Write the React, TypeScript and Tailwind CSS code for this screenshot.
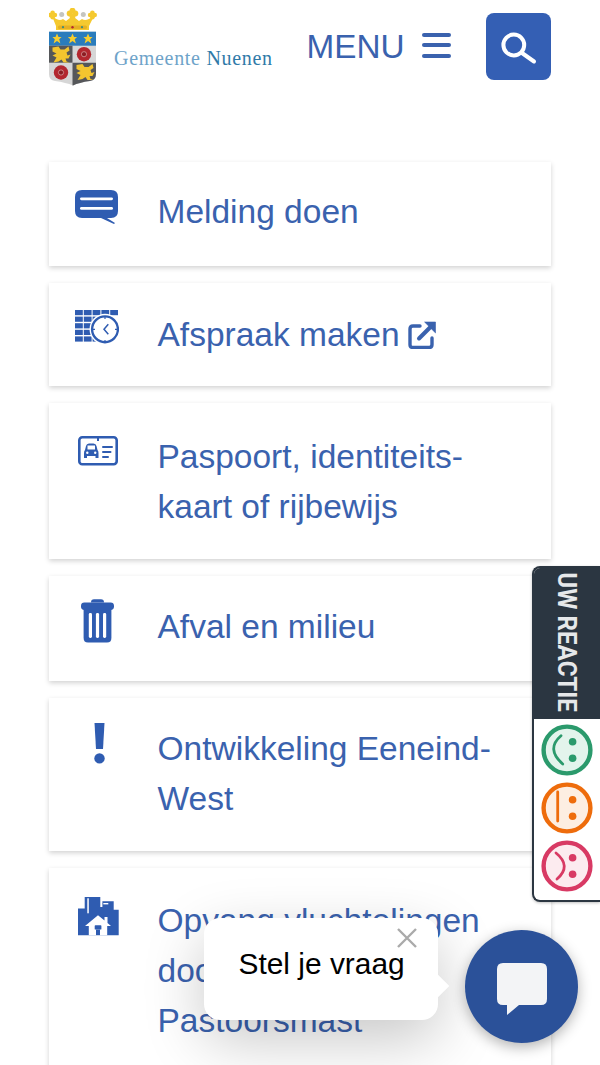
import React from "react";

const blue = "#3a62ae";

function Logo() {
  const star = (cx: number) => (
    <polygon
      fill="#f6cd2e"
      points={`${cx},25.5 ${cx + 1.5},29 ${cx + 4.6},29 ${cx + 2.2},31.2 ${cx + 3.4},35.5 ${cx},33 ${cx - 3.4},35.5 ${cx - 2.2},31.2 ${cx - 4.6},29 ${cx - 1.5},29`}
    />
  );
  const lion = (x: number, y: number) => (
    <path
      transform={`translate(${x} ${y})`}
      fill="#f3c52f"
      d="M2 1 L8 0 L10 3 L14 3 L18 0 L19 4 L16 6 L17 9 L20 8 L18 12 L15 12 L16 15 L19 16 L13 16 L11 13 L8 15 L3 16 L6 11 L2 9 L6 7 L2 5Z"
    />
  );
  const rose = (cx: number, cy: number) => (
    <g>
      <circle cx={cx} cy={cy} r="7.2" fill="#b3272f" />
      <circle cx={cx} cy={cy} r="2.6" fill="#8c1c22" stroke="#e8c0c0" strokeWidth="0.6" />
    </g>
  );
  const clover = (cx: number, cy: number, r: number) => (
    <g fill="#f5c92f">
      <circle cx={cx} cy={cy - r} r={r} />
      <circle cx={cx - r} cy={cy} r={r} />
      <circle cx={cx + r} cy={cy} r={r} />
      <circle cx={cx} cy={cy + r} r={r} />
    </g>
  );
  return (
    <svg width="48" height="78" viewBox="0 0 48 78" className="block shrink-0">
      {clover(23.5, 5.5, 2.9)}
      {clover(3.6, 7, 2.3)}
      {clover(43.4, 7, 2.3)}
      <circle cx="12.7" cy="6.4" r="2.5" fill="#c5c5c0" />
      <circle cx="34.3" cy="6.4" r="2.5" fill="#c5c5c0" />
      <path d="M3 8 C8 12 11 13 14 11 L17 13 L23.5 8 L30 13 L33 11 C36 13 39 12 45 8 L40 18 L40 22 L7 22 L7 18Z" fill="#f5c92f" />
      <rect x="9" y="17.5" width="29" height="3.5" rx="1.5" fill="#e5b024" />
      <circle cx="14" cy="19.2" r="1.1" fill="#3d8d7a" />
      <circle cx="23.5" cy="19.2" r="1.2" fill="#b3272f" />
      <circle cx="33" cy="19.2" r="1.1" fill="#3d8d7a" />
      <path d="M0 23.7 H47 V66 Q47 72 41 73 Q30 74.5 24 77.5 Q17 74.5 6 73 Q0 72 0 66Z" fill="#d6d6d6" />
      <rect x="0" y="23.7" width="47" height="14" fill="#2a7cbc" />
      {star(8)}
      {star(23.5)}
      {star(39)}
      <rect x="0" y="37.7" width="23.5" height="17" fill="#55575a" />
      <path d="M23.5 54.7 H47 V66 Q47 72 41 73 Q30 74.5 24 77.5 L23.5 77.3Z" fill="#55575a" />
      {lion(1.5, 38.5)}
      {lion(25.5, 56)}
      {rose(35, 46.2)}
      {rose(12, 64.5)}
    </svg>
  );
}

function ChatIcon() {
  return (
    <svg width="44" height="35" viewBox="0 0 44 35" className="block">
      <path d="M7 0 H36 Q43 0 43 7 V21 Q43 28 36 28 H32 L40 33 L39 34 L26 28 H7 Q0 28 0 21 V7 Q0 0 7 0Z" fill="#2f5cb1" />
      <rect x="5" y="7.4" width="33" height="2.8" rx="1.4" fill="#fff" />
      <rect x="5" y="17" width="33" height="2.8" rx="1.4" fill="#fff" />
    </svg>
  );
}

function CalendarIcon() {
  const cells: React.ReactNode[] = [];
  const xs = [0, 8.8, 17.6, 26.4, 35.2];
  const ys = [0, 6.6, 13.2, 19.8, 26.4];
  ys.forEach((y) =>
    xs.forEach((x) => {
      if (y > 0 && x > 20) return;
      cells.push(<rect key={`${x}-${y}`} x={x} y={y} width="7.8" height="5.2" fill="#2f5cb1" />);
    })
  );
  return (
    <svg width="44" height="34" viewBox="0 0 44 34" className="block">
      {cells}
      <circle cx="30" cy="19.3" r="15.5" fill="#fff" />
      <circle cx="30" cy="19.3" r="12.9" fill="#fff" stroke="#2f5cb1" strokeWidth="2.4" />
      <path d="M33.3 14.3 L29 19.3 L33.3 24.3" fill="none" stroke="#2f5cb1" strokeWidth="1.5" />
      <path d="M30 7 V9 M30 30 V32 M18 19.3 H20 M40 19.3 H42" stroke="#2f5cb1" strokeWidth="1.2" />
    </svg>
  );
}

function CardIcon() {
  return (
    <svg width="40" height="30" viewBox="0 0 40 30" className="block">
      <rect x="1.3" y="1.3" width="37.4" height="27" rx="3" fill="#fff" stroke="#2f5cb1" strokeWidth="2.6" />
      <rect x="19" y="1" width="2" height="4" fill="#2f5cb1" />
      <path d="M8 10 Q8.5 7.5 11 7.5 H15.5 Q18 7.5 18.5 10 L19.5 14 Q20.5 15 20.5 17 V22 H17.5 V20 H9 V22 H6 V17 Q6 15 7 14Z" fill="#2f5cb1" />
      <rect x="9.5" y="9.5" width="7.5" height="4" fill="#fff" />
      <circle cx="9.3" cy="16.8" r="1.2" fill="#fff" />
      <circle cx="17.2" cy="16.8" r="1.2" fill="#fff" />
      <rect x="24" y="10" width="11" height="2" rx="1" fill="#2f5cb1" />
      <rect x="24" y="15" width="9.5" height="2" rx="1" fill="#2f5cb1" />
      <rect x="24" y="20" width="7" height="2" rx="1" fill="#2f5cb1" />
    </svg>
  );
}

function TrashIcon() {
  return (
    <svg width="33" height="44" viewBox="0 0 33 44" className="block">
      <path d="M10 3.6 Q10 0.3 13 0.3 H20 Q23 0.3 23 3.6Z" fill="#2f5cb1" />
      <rect x="0" y="3.6" width="33" height="7.4" rx="3.4" fill="#2f5cb1" />
      <path d="M2.6 9 H30.4 V39 Q30.4 43.6 26 43.6 H7 Q2.6 43.6 2.6 39Z" fill="#2f5cb1" />
      <rect x="7.8" y="14" width="3.2" height="25" rx="1.4" fill="#fff" />
      <rect x="14.9" y="14" width="3.2" height="25" rx="1.4" fill="#fff" />
      <rect x="22" y="14" width="3.2" height="25" rx="1.4" fill="#fff" />
    </svg>
  );
}

function ExclaimIcon() {
  return (
    <svg width="11" height="41" viewBox="0 0 11 41" className="block">
      <path d="M0.5 0 H10.5 L9 26 H2Z" fill="#2f5cb1" />
      <circle cx="5.5" cy="35.4" r="5.2" fill="#2f5cb1" />
    </svg>
  );
}

function HouseIcon() {
  return (
    <svg width="42" height="39" viewBox="0 0 42 39" className="block">
      <path d="M0 11.6 H6.7 V0 H22.3 V10 H24.4 V4.3 H35.7 V12.7 H40.7 V38.3 H0Z" fill="#2f5cb1" />
      <rect x="9.3" y="1.3" width="1.5" height="15" fill="#fff" />
      <rect x="25.3" y="6" width="5" height="1.4" fill="#fff" />
      <path d="M20 18.3 L26.5 23.6 V20 H29.5 V26 L33 29 H29.2 V38.3 H22 V32.6 H18 V38.3 H10.8 V29 H7Z" fill="#fff" />
      <rect x="16.7" y="28.3" width="6.7" height="4.3" rx="0.7" fill="#2f5cb1" />
    </svg>
  );
}

function ExternalIcon() {
  return (
    <svg width="28" height="28" viewBox="0 0 28 28" className="block">
      <path d="M24 17 V23.5 Q24 26.5 21 26.5 H5 Q2 26.5 2 23.5 V8 Q2 5 5 5 H12" fill="none" stroke={blue} strokeWidth="3.4" strokeLinecap="round" />
      <path d="M16.6 1 H27.5 V11.9Z" fill={blue} stroke={blue} strokeWidth="0.6" strokeLinejoin="round" />
      <path d="M22.5 6 L11 17.5" fill="none" stroke={blue} strokeWidth="4" strokeLinecap="round" />
    </svg>
  );
}

function Tile({ icon, children, className, iconClass }: { icon: React.ReactNode; children: React.ReactNode; className: string; iconClass: string }) {
  return (
    <a className={`flex bg-white shadow-[0_2px_5px_rgba(0,0,0,0.18)] pr-[26px] mb-[17px] ${className}`}>
      <div className={`w-[108.5px] shrink-0 flex justify-start ${iconClass}`}>{icon}</div>
      <div className="text-[33.5px] leading-[50px] text-[#3a62ae] min-w-0">{children}</div>
    </a>
  );
}

function Face({ mouth, stroke, fill }: { mouth: React.ReactNode; stroke: string; fill: string }) {
  return (
    <svg width="52" height="52" viewBox="0 0 52 52" className="block">
      <circle cx="26" cy="26" r="23.4" fill={fill} stroke={stroke} strokeWidth="4.4" />
      <circle cx="31.6" cy="17.7" r="3.8" fill={stroke} />
      <circle cx="31.6" cy="34.3" r="3.8" fill={stroke} />
      {mouth}
    </svg>
  );
}

function Feedback() {
  return (
    <div className="absolute right-0 top-[566px] w-[68px] h-[336px] bg-white border-2 border-r-0 border-[#2b3641] rounded-l-lg overflow-hidden flex flex-col shadow-[0_1px_3px_rgba(0,0,0,0.25)]">
      <div className="h-[151px] shrink-0 bg-[#2b3641] flex items-center justify-center pr-[2px] pb-[2px]">
        <span className="[writing-mode:vertical-rl] font-['Roboto'] font-bold text-[25px] text-[#e6e8ea] whitespace-nowrap scale-y-[0.97] leading-none">
          UW REACTIE
        </span>
      </div>
      <div className="flex-1 flex flex-col items-center gap-[6px] pt-[5px]">
        <Face
          stroke="#2b9a6c"
          fill="#e3f4ec"
          mouth={<path d="M20 11.7 Q4.6 25 21.7 40" fill="none" stroke="#2b9a6c" strokeWidth="2.8" strokeLinecap="round" />}
        />
        <Face
          stroke="#ee6c0c"
          fill="#fdeee2"
          mouth={<path d="M16.7 10 V39" fill="none" stroke="#ee6c0c" strokeWidth="2.8" strokeLinecap="round" />}
        />
        <Face
          stroke="#d83a64"
          fill="#fcebef"
          mouth={<path d="M15 13 Q31 26 16 39" fill="none" stroke="#d83a64" strokeWidth="2.8" strokeLinecap="round" />}
        />
      </div>
    </div>
  );
}

function ChatWidget() {
  return (
    <>
      <div className="absolute left-[204px] top-[918px] w-[234px] h-[102px] bg-white rounded-[16px] shadow-[0_20px_60px_rgba(0,0,0,0.22)]">
        <div className="absolute right-[-8px] top-[60px] w-[16px] h-[16px] bg-white rotate-45" />
        <span className="absolute left-[34.5px] top-[28px] text-[29.9px] leading-[36px] text-black whitespace-nowrap">Stel je vraag</span>
        <svg width="22" height="22" viewBox="0 0 22 22" className="absolute left-[192px] top-[9px]">
          <path d="M2 2 L20 20 M20 2 L2 20" stroke="#aaaaaa" strokeWidth="2.4" />
        </svg>
      </div>
      <div className="absolute left-[465px] top-[930px] w-[113px] h-[113px] rounded-full bg-[#2b5199] shadow-[0_4px_14px_rgba(0,0,0,0.3)] flex items-center justify-center pt-[4px]">
        <svg width="50" height="52" viewBox="0 0 50 52" className="block">
          <path d="M6 0 H44 Q50 0 50 6 V36 Q50 42 44 42 H22 L10 52 V42 H6 Q0 42 0 36 V6 Q0 0 6 0Z" fill="#f3f4f6" />
        </svg>
      </div>
    </>
  );
}

export default function App() {
  return (
    <div className="relative h-[1065px] w-[600px] overflow-hidden bg-white font-['Liberation_Sans',Arial,sans-serif]">
      <header className="flex items-start pl-[49px] pr-[49px] pt-[8px] h-[162px]">
        <Logo />
        <div className="ml-[17px] mt-[38px] text-[20px] leading-[24px] font-['Liberation_Serif',serif] tracking-[0.7px] whitespace-nowrap w-[192.5px]">
          <span className="text-[#6ea3c9]">Gemeente </span>
          <span className="text-[#2f7aa8]">Nuenen</span>
        </div>
        <div className="flex items-center mt-[19px] text-[33.3px] leading-[40px] text-[#3a62ae]">
          <span>MENU</span>
          <div className="ml-[17.5px] w-[29px] flex flex-col gap-[6.5px] mb-[4px]">
            <div className="h-[4px] rounded-full bg-[#3a62ae]" />
            <div className="h-[4px] rounded-full bg-[#3a62ae]" />
            <div className="h-[4px] rounded-full bg-[#3a62ae]" />
          </div>
        </div>
        <button className="ml-auto mt-[5px] w-[65px] h-[67px] rounded-lg bg-[#345fb4] flex items-center justify-center">
          <svg width="36" height="36" viewBox="0 0 36 36" fill="none" stroke="#fff" strokeWidth="4" strokeLinecap="round" className="block">
            <circle cx="12.8" cy="16" r="10.4" />
            <path d="M21 24 L33 32.5" />
          </svg>
        </button>
      </header>
      <main className="px-[49px]">
        <Tile className="pt-[25px] pb-[29px]" icon={<ChatIcon />} iconClass="pl-[26px] pt-[3px]">Melding doen</Tile>
        <Tile className="pt-[27px] pb-[26px]" icon={<CalendarIcon />} iconClass="pl-[26px]">
          <span className="inline-flex items-center gap-[8px]">Afspraak maken <ExternalIcon /></span>
        </Tile>
        <Tile className="pt-[29px] pb-[27px]" icon={<CardIcon />} iconClass="pl-[29px] pt-[4px]">Paspoort, identiteits-kaart of rijbewijs</Tile>
        <Tile className="pt-[26px] pb-[29px]" icon={<TrashIcon />} iconClass="pl-[32px] -mt-[3px]">Afval en milieu</Tile>
        <Tile className="pt-[26px] pb-[27px]" icon={<ExclaimIcon />} iconClass="pl-[45px] -mt-[1px]">Ontwikkeling Eeneind-West</Tile>
        <Tile className="pt-[28px] pb-[30px]" icon={<HouseIcon />} iconClass="pl-[29px] pt-[1px]">Opvang vluchtelingen door gemeente in Pastoorsmast</Tile>
      </main>
      <Feedback />
      <ChatWidget />
    </div>
  );
}
